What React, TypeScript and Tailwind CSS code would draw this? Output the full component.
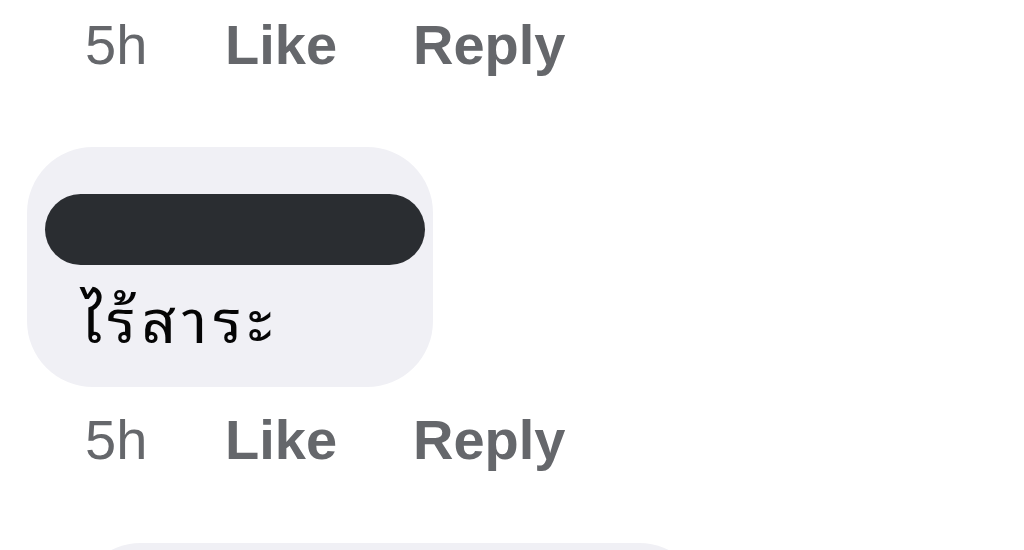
import React from "react";

const ActionRow: React.FC<{ time: string }> = ({ time }) => {
  return (
    <div className="flex items-baseline pl-[85px] text-[56px] leading-[56px] text-[#65676b] font-['Liberation_Sans',Arial,sans-serif]">
      <span className="w-[140px]">{time}</span>
      <span className="w-[188px] font-bold">Like</span>
      <span className="font-bold">Reply</span>
    </div>
  );
};

export default function App() {
  return (
    <div className="h-[550px] w-[1024px] overflow-hidden bg-white">
      <div className="pt-[17px]">
        <ActionRow time="5h" />
      </div>

      {/* comment bubble */}
      <div className="ml-[27px] mt-[74px] h-[240px] w-[406px] rounded-[66px] bg-[#f0f0f5] pt-[47px] pl-[18px]">
        <div className="h-[71px] w-[380px] rounded-full bg-[#2a2d31]"></div>
        <div className="mt-[16px] pl-[36px] text-[60px] leading-[70px] tracking-[6px] text-[#050505] font-['Noto_Sans_Thai_Looped','Noto_Sans_Thai','Noto_Sans','DejaVu_Sans',sans-serif]">
          ไร้สาระ
        </div>
      </div>

      <div className="mt-[25px]">
        <ActionRow time="5h" />
      </div>

      <div className="ml-[75px] mt-[75px] h-[200px] w-[630px] rounded-[66px] bg-[#f0f0f5]"></div>
    </div>
  );
}
